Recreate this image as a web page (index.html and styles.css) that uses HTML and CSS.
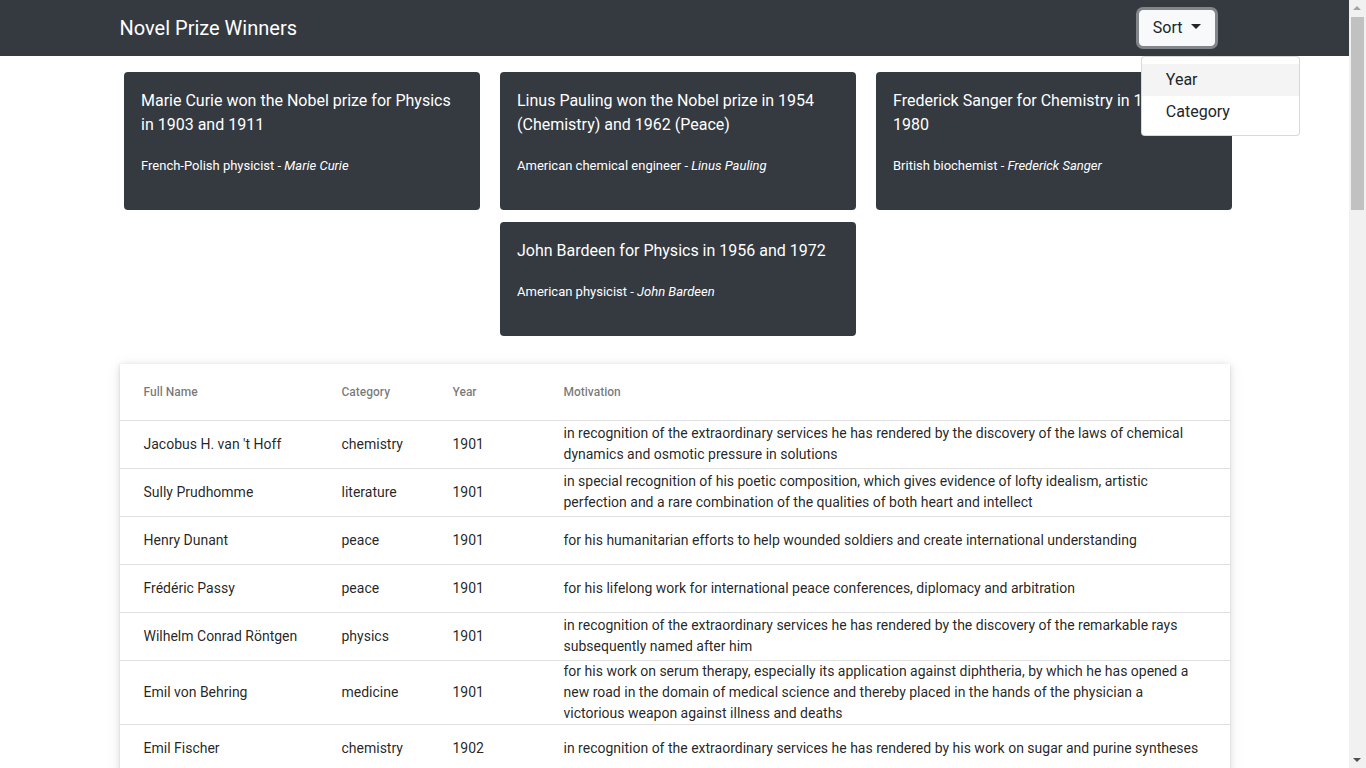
FILE: index.html
```html
<!DOCTYPE html>
<html lang="en">
<head>
<meta charset="utf-8">
<title>Novel Prize Winners</title>
<link rel="stylesheet" href="styles.css">
</head>
<body>
<nav class="navbar">
  <div class="nav-inner">
    <span class="brand">Novel Prize Winners</span>
    <div class="dropdown">
      <button class="sort-btn" type="button">Sort <span class="caret"></span></button>
      <div class="dropdown-menu">
        <div class="dropdown-item active">Year</div>
        <div class="dropdown-item">Category</div>
      </div>
    </div>
  </div>
</nav>

<main class="container">
  <section class="cards">
    <div class="card">
      <p class="card-title">Marie Curie won the Nobel prize for Physics in 1903 and 1911</p>
      <p class="card-sub">French-Polish physicist - <em>Marie Curie</em></p>
    </div>
    <div class="card">
      <p class="card-title">Linus Pauling won the Nobel prize in 1954 (Chemistry) and 1962 (Peace)</p>
      <p class="card-sub">American chemical engineer - <em>Linus Pauling</em></p>
    </div>
    <div class="card">
      <p class="card-title">Frederick Sanger for Chemistry in 1958 and 1980</p>
      <p class="card-sub">British biochemist - <em>Frederick Sanger</em></p>
    </div>
    <div class="card">
      <p class="card-title">John Bardeen for Physics in 1956 and 1972</p>
      <p class="card-sub">American physicist - <em>John Bardeen</em></p>
    </div>
  </section>

  <section class="table-card">
    <table class="winners">
      <colgroup>
        <col class="c-name"><col class="c-cat"><col class="c-year"><col class="c-mot">
      </colgroup>
      <thead>
        <tr><th>Full Name</th><th>Category</th><th>Year</th><th>Motivation</th></tr>
      </thead>
      <tbody>
        <tr><td>Jacobus H. van 't Hoff</td><td>chemistry</td><td>1901</td><td>in recognition of the extraordinary services he has rendered by the discovery of the laws of chemical dynamics and osmotic pressure in solutions</td></tr>
        <tr><td>Sully Prudhomme</td><td>literature</td><td>1901</td><td>in special recognition of his poetic composition, which gives evidence of lofty idealism, artistic perfection and a rare combination of the qualities of both heart and intellect</td></tr>
        <tr><td>Henry Dunant</td><td>peace</td><td>1901</td><td>for his humanitarian efforts to help wounded soldiers and create international understanding</td></tr>
        <tr><td>Frédéric Passy</td><td>peace</td><td>1901</td><td>for his lifelong work for international peace conferences, diplomacy and arbitration</td></tr>
        <tr><td>Wilhelm Conrad Röntgen</td><td>physics</td><td>1901</td><td>in recognition of the extraordinary services he has rendered by the discovery of the remarkable rays subsequently named after him</td></tr>
        <tr><td>Emil von Behring</td><td>medicine</td><td>1901</td><td>for his work on serum therapy, especially its application against diphtheria, by which he has opened a new road in the domain of medical science and thereby placed in the hands of the physician a victorious weapon against illness and deaths</td></tr>
        <tr><td>Emil Fischer</td><td>chemistry</td><td>1902</td><td>in recognition of the extraordinary services he has rendered by his work on sugar and purine syntheses</td></tr>
      </tbody>
    </table>
  </section>
</main>

<div class="scrollbar" aria-hidden="true">
  <span class="sb-up"></span>
  <span class="sb-thumb"></span>
  <span class="sb-down"></span>
</div>
</body>
</html>
```

FILE: styles.css
```css
* { box-sizing: border-box; }

html, body {
  margin: 0;
  padding: 0;
}

body {
  font-family: Roboto, "Liberation Sans", Arial, sans-serif;
  font-size: 16px;
  line-height: 1.5;
  color: #212529;
  background: #fff;
  margin-right: 17px;
  height: 768px;
  overflow: hidden;
}

.navbar {
  background: #343a40;
  height: 56px;
}

.nav-inner {
  max-width: 1140px;
  margin: 0 auto;
  height: 100%;
  padding: 0 15px;
  display: flex;
  align-items: center;
  justify-content: space-between;
}

.brand {
  color: #fff;
  font-size: 20px;
  line-height: 30px;
}

.dropdown {
  position: relative;
  margin-right: 15px;
}

.sort-btn {
  font-family: inherit;
  font-size: 16px;
  line-height: 24px;
  color: #212529;
  background: #f8f9fa;
  border: 1px solid #f8f9fa;
  border-radius: 4px;
  padding: 5px 13px;
  box-shadow: 0 0 0 3px #82858a;
  display: flex;
  align-items: center;
  gap: 8px;
  cursor: pointer;
}

.caret {
  display: inline-block;
  width: 0;
  height: 0;
  border-top: 5px solid #212529;
  border-left: 5px solid transparent;
  border-right: 5px solid transparent;
  margin-top: -3px;
}

.dropdown-menu {
  position: absolute;
  left: 2px;
  top: calc(100% + 10px);
  width: 159px;
  padding: 7px 0;
  background: #fff;
  border: 1px solid rgba(0, 0, 0, 0.15);
  border-radius: 4px;
  z-index: 10;
}

.dropdown-item {
  padding: 4px 24px;
  font-size: 16px;
  line-height: 24px;
  color: #212529;
  white-space: nowrap;
}

.dropdown-item.active {
  background: #f4f4f4;
}

.container {
  max-width: 1140px;
  margin: 0 auto;
  padding: 0 15px;
}

.cards {
  display: flex;
  flex-wrap: wrap;
  justify-content: center;
  gap: 12px 20px;
  padding-top: 16px;
  margin: 0 -4px 0 3px;
}

.card {
  width: 356px;
  background: #343a40;
  color: #fff;
  border-radius: 4px;
  padding: 17px 17px 34px;
}

.card-title {
  margin: 0 0 19px;
  font-size: 16px;
  line-height: 24px;
}

.card-sub {
  margin: 0;
  font-size: 13px;
  line-height: 20px;
}

.table-card {
  margin: 28px 0 0;
  background: #fff;
  box-shadow: 0 2px 1px -1px rgba(0,0,0,.2), 0 1px 1px 0 rgba(0,0,0,.14), 0 1px 6px 0 rgba(0,0,0,.12), 0 3px 14px 2px rgba(0,0,0,.06);
}

.winners {
  width: 100%;
  border-collapse: collapse;
  table-layout: fixed;
}

.c-name { width: 222px; }
.c-cat { width: 111px; }
.c-year { width: 111px; }
.c-mot { width: auto; }

.winners th,
.winners td {
  text-align: left;
  padding: 0 24px 0 0;
  border-bottom: 1px solid #e0e0e0;
  vertical-align: middle;
}

.winners th:first-child,
.winners td:first-child {
  padding-left: 24px;
}

.winners th {
  height: 56px;
  font-size: 12px;
  font-weight: 500;
  color: rgba(0, 0, 0, 0.54);
}

.winners td {
  height: 48px;
  font-size: 14px;
  line-height: 21px;
  color: rgba(0, 0, 0, 0.87);
}

.scrollbar {
  position: fixed;
  top: 0;
  right: 0;
  width: 17px;
  height: 100%;
  background: #f1f1f1;
}

.sb-up,
.sb-down {
  position: absolute;
  left: 4px;
  width: 0;
  height: 0;
  border-left: 4px solid transparent;
  border-right: 4px solid transparent;
}

.sb-up {
  top: 6px;
  border-bottom: 4px solid #a3a3a3;
}

.sb-down {
  bottom: 6px;
  border-top: 4px solid #505050;
}

.sb-thumb {
  position: absolute;
  left: 2px;
  top: 17px;
  width: 13px;
  height: 193px;
  background: #c1c1c1;
}
```
